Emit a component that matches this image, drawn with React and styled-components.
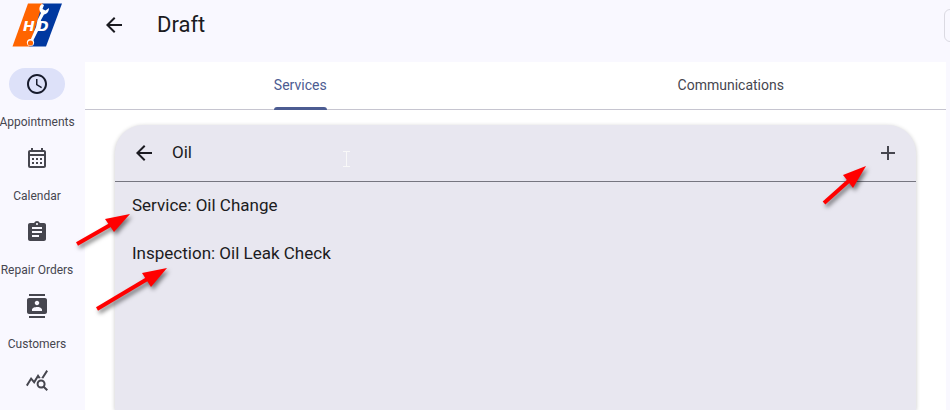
import React, { useState } from "react";
import styled, { createGlobalStyle } from "styled-components";
import {
  MdAccessTime,
  MdAdd,
  MdArrowBack,
  MdAssignment,
  MdContacts,
  MdOutlineCalendarMonth,
  MdQueryStats,
} from "react-icons/md";

const GlobalStyle = createGlobalStyle`
  * {
    box-sizing: border-box;
  }

  body {
    margin: 0;
    background-color: #f9f8ff;
    color: #1b1b21;
    font-family: Roboto, "Liberation Sans", sans-serif;
  }

  button,
  input {
    font-family: inherit;
  }
`;

const Page = styled.div`
  position: relative;
  display: flex;
  height: 100vh;
  overflow: hidden;
`;

// Navigation rail on the left
const Rail = styled.nav`
  display: flex;
  flex-direction: column;
  flex: none;
  align-items: center;
  gap: 12px;
  width: 85px;
  padding: 3px 11px 0 0;
`;

const Logo = styled.svg`
  flex: none;
  width: 50px;
  height: 44px;
  margin-bottom: 9px;
`;

const RailLink = styled.a`
  display: flex;
  flex-direction: column;
  flex: none;
  align-items: center;
  gap: 14px;
  color: #46464f;
  font-size: 12px;
  line-height: 16px;
  white-space: nowrap;
  text-decoration: none;
`;

const RailIcon = styled.span`
  display: flex;
  align-items: center;
  justify-content: center;
  width: 56px;
  height: 32px;
  border-radius: 16px;
  background-color: ${({ $active }) => ($active ? "#dde1f9" : "transparent")};
  color: ${({ $active }) => ($active ? "#171b2c" : "#46464f")};
`;

const Main = styled.main`
  display: flex;
  flex-direction: column;
  flex: 1;
  min-width: 0;
`;

const Header = styled.header`
  display: flex;
  align-items: center;
  height: 62px;
  padding: 0 0 12px 9px;
  overflow: hidden;
`;

const IconButton = styled.button`
  display: flex;
  flex: none;
  align-items: center;
  justify-content: center;
  width: 40px;
  height: 40px;
  padding: 0;
  border: 0;
  border-radius: 50%;
  background: none;
  color: ${({ $muted }) => ($muted ? "#46464f" : "#1b1b21")};
  cursor: pointer;
`;

const Title = styled.h1`
  flex: 1;
  margin: 0 0 0 23px;
  font-size: 22px;
  font-weight: 400;
  line-height: 28px;
`;

// Runs past the right edge of the header
const HeaderAction = styled.button`
  flex: none;
  width: 48px;
  height: 33px;
  margin-right: -42px;
  border: 1px solid #dbdae2;
  border-radius: 6px;
  background: none;
`;

const Content = styled.section`
  display: flex;
  flex-direction: column;
  flex: 1;
  min-height: 0;
  margin-right: 4px;
  background-color: #ffffff;
`;

const Tabs = styled.div`
  display: flex;
  flex: none;
  height: 48px;
  border-bottom: 1px solid #c6c5d0;
`;

const Tab = styled.button`
  display: flex;
  flex: 1;
  justify-content: center;
  padding: 0;
  border: 0;
  background: none;
  color: ${({ $active }) => ($active ? "#4c5c92" : "#46464f")};
  font-size: 14px;
  line-height: 46px;
  cursor: pointer;
`;

const TabLabel = styled.span`
  display: flex;
  flex-direction: column;
  height: 48px;

  &::after {
    content: "";
    height: 3px;
    margin-top: -1px;
    border-radius: 3px 3px 0 0;
    background-color: ${({ $active }) => ($active ? "#4c5c92" : "transparent")};
  }
`;

const SearchCard = styled.div`
  flex: 1;
  margin: 15px 30px 0;
  border-radius: 28px 28px 0 0;
  background-color: #e8e7f0;
  box-shadow: 0 1px 4px rgba(0, 0, 0, 0.22);
`;

const SearchBar = styled.div`
  display: flex;
  align-items: center;
  height: 57px;
  padding: 0 8px 0 9px;
  border-bottom: 1px solid #767680;
`;

const SearchInput = styled.input`
  flex: 1;
  min-width: 0;
  height: 24px;
  margin-left: 8px;
  padding: 0 0 2px;
  border: 0;
  outline: 0;
  background: none;
  color: #1b1b21;
  font-size: 17px;
`;

const Results = styled.ul`
  margin: 0;
  padding: 0;
  list-style: none;
`;

const ResultButton = styled.button`
  width: 100%;
  height: 48px;
  padding: 0 17px 2px;
  border: 0;
  background: none;
  color: #1b1b21;
  font-size: 17px;
  line-height: 24px;
  text-align: left;
  cursor: pointer;
`;

// Red arrows and pointer drawn on top of the page
const Annotations = styled.svg`
  position: absolute;
  top: 0;
  left: 0;
  pointer-events: none;
`;

const ArrowShape = styled.g`
  fill: #ff0000;
  stroke: #ff0000;
  filter: drop-shadow(2px 3px 2px rgba(0, 0, 0, 0.5));
`;

const railItems = [
  { label: "Appointments", icon: MdAccessTime, active: true },
  { label: "Calendar", icon: MdOutlineCalendarMonth },
  { label: "Repair Orders", icon: MdAssignment },
  { label: "Customers", icon: MdContacts },
];

const tabs = ["Services", "Communications"];

const results = ["Service: Oil Change", "Inspection: Oil Leak Check"];

const arrows = [
  { line: "M77 244 L112 224", head: "130,214 105,219 114,232" },
  { line: "M97 309 L149 278", head: "167,268 142,273 151,287" },
  { line: "M824 203 L852 178", head: "866,166 843,175 853,188" },
];

const BrandLogo = () => (
  <Logo viewBox="0 0 50 44" role="img" aria-label="HD">
    <path d="M16 0.5H31L18 43.5H0.5Z" fill="#ff6400" />
    <path d="M30.5 0.5H50L34 43.5H17.5Z" fill="#0038a0" />
    <path
      d="M30 1C27 3 26.5 7 29 10L25.5 17L24 24L18.5 37L21 38L27 26L29 17L32 11.5C35 11 37 8.500 37 5L33.5 7.500L30.5 6L32 2Z"
      fill="#ffffff"
    />
    <circle cx="18.5" cy="39.5" r="3.6" fill="#ffffff" />
    <circle cx="18.5" cy="40" r="2.6" fill="#ff6400" />
    <g
      fill="#ffffff"
      fontFamily="DejaVu Sans, sans-serif"
      fontSize="14"
      fontStyle="italic"
      fontWeight="700"
    >
      <text x="11" y="28">
        H
      </text>
      <text x="25" y="28">
        D
      </text>
    </g>
  </Logo>
);

const App = () => {
  const [activeTab, setActiveTab] = useState("Services");
  const [query, setQuery] = useState("Oil");

  return (
    <Page>
      <GlobalStyle />
      <Rail>
        <BrandLogo />
        {railItems.map(({ label, icon: Icon, active }) => (
          <RailLink key={label} href="#">
            <RailIcon $active={active}>
              <Icon size={24} />
            </RailIcon>
            {label}
          </RailLink>
        ))}
        <RailLink href="#" aria-label="Reports">
          <RailIcon>
            <MdQueryStats size={24} />
          </RailIcon>
        </RailLink>
      </Rail>

      <Main>
        <Header>
          <IconButton type="button" aria-label="Back">
            <MdArrowBack size={24} />
          </IconButton>
          <Title>Draft</Title>
          <HeaderAction type="button" aria-label="More" />
        </Header>

        <Content>
          <Tabs role="tablist">
            {tabs.map((tab) => (
              <Tab
                key={tab}
                type="button"
                role="tab"
                aria-selected={tab === activeTab}
                $active={tab === activeTab}
                onClick={() => setActiveTab(tab)}
              >
                <TabLabel $active={tab === activeTab}>{tab}</TabLabel>
              </Tab>
            ))}
          </Tabs>

          <SearchCard>
            <SearchBar>
              <IconButton type="button" aria-label="Close search">
                <MdArrowBack size={24} />
              </IconButton>
              <SearchInput
                aria-label="Search"
                value={query}
                onChange={(e) => setQuery(e.target.value)}
              />
              <IconButton type="button" aria-label="Add" $muted>
                <MdAdd size={24} />
              </IconButton>
            </SearchBar>
            <Results>
              {results.map((result) => (
                <li key={result}>
                  <ResultButton type="button">{result}</ResultButton>
                </li>
              ))}
            </Results>
          </SearchCard>
        </Content>
      </Main>

      <Annotations width="950" height="410" aria-hidden="true">
        {arrows.map(({ line, head }) => (
          <ArrowShape key={line}>
            <path d={line} strokeWidth="4" />
            <polygon points={head} strokeWidth="0" />
          </ArrowShape>
        ))}
        <path
          d="M343 151.5H350M343 166.5H350M346.5 152V166"
          stroke="#f8f8f8"
          fill="none"
        />
      </Annotations>
    </Page>
  );
};

export default App;
